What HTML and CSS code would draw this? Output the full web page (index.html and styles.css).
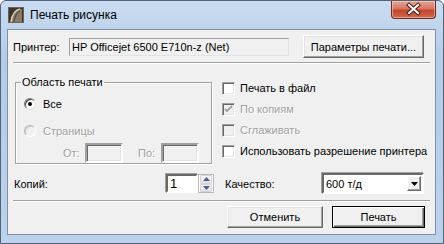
FILE: index.html
```html
<!DOCTYPE html>
<html lang="ru">
<head>
    <meta charset="UTF-8">
    <meta name="viewport" content="width=device-width, initial-scale=1.0">
    <title>Печать рисунка</title>
    <link rel="stylesheet" href="styles.css">
</head>
<body>
    <div class="window">
        <div class="titlebar">
            <svg class="app-icon" width="16" height="16" viewBox="0 0 16 16">
                <rect x="0.5" y="0.5" width="15" height="15" fill="#3d362f" stroke="#6b6259"/>
                <path d="M3 15 C4 8 7 3 12 2 L14 2 L14 15 Z" fill="#8a7a66"/>
                <path d="M3 15 C4 8 7 3 12 2" fill="none" stroke="#d9cdb8" stroke-width="1.6"/>
                <path d="M6 15 C7 9 9 5 12 4" fill="none" stroke="#5a4e42" stroke-width="1.2"/>
            </svg>
            <span class="title">Печать рисунка</span>
            <div class="close-btn">
                <svg width="43" height="17" viewBox="0 0 43 17">
                    <path d="M17 4 L26 12 M26 4 L17 12" stroke="#4a1a10" stroke-width="4" stroke-linecap="square"/>
                    <path d="M17 4 L26 12 M26 4 L17 12" stroke="#fff" stroke-width="2" stroke-linecap="square"/>
                </svg>
            </div>
        </div>

        <div class="client">
            <div class="printer-row">
                <span class="printer-label">Принтер:</span>
                <div class="printer-name">HP Officejet 6500 E710n-z (Net)</div>
                <button class="btn setup-btn">Параметры печати...</button>
            </div>

            <div class="sep"></div>

            <div class="options">
                <fieldset class="group">
                    <legend>Область печати</legend>
                    <label class="radio first"><span class="radio-box checked"></span>Все</label>
                    <label class="radio disabled"><span class="radio-box"></span>Страницы</label>
                    <div class="range-row disabled">
                        <span class="range-label">От:</span>
                        <span class="edit"></span>
                        <span class="range-label second">По:</span>
                        <span class="edit"></span>
                    </div>
                </fieldset>

                <div class="checks">
                    <label class="check"><span class="check-box"></span>Печать в файл</label>
                    <label class="check disabled">
                        <span class="check-box">
                            <svg width="11" height="11" viewBox="0 0 11 11"><path d="M2 5 L4 7 L9 2" fill="none" stroke="#a0a0a0" stroke-width="1.8"/></svg>
                        </span>По копиям
                    </label>
                    <label class="check disabled"><span class="check-box"></span>Сглаживать</label>
                    <label class="check"><span class="check-box"></span>Использовать разрешение принтера</label>
                </div>

                <div class="copies-row">
                    <span class="copies-label">Копий:</span>
                    <div class="spin">
                        <span class="spin-edit">1</span>
                        <div class="spin-buttons">
                            <span class="spin-btn"><svg width="7" height="4" viewBox="0 0 7 4"><path d="M0 4 L3.5 0 L7 4 Z" fill="#4a5f8c"/></svg></span>
                            <span class="spin-btn"><svg width="7" height="4" viewBox="0 0 7 4"><path d="M0 0 L3.5 4 L7 0 Z" fill="#4a5f8c"/></svg></span>
                        </div>
                    </div>
                </div>

                <div class="quality-row">
                    <span class="quality-label">Качество:</span>
                    <div class="combo">
                        <span class="combo-text">600 т/д</span>
                        <span class="combo-btn"><svg width="7" height="4" viewBox="0 0 7 4"><path d="M0 0 L3.5 4 L7 0 Z" fill="#000"/></svg></span>
                    </div>
                </div>
            </div>

            <div class="sep bottom"></div>

            <div class="buttons">
                <button class="btn cancel-btn">Отменить</button>
                <button class="btn default print-btn">Печать</button>
            </div>
        </div>
    </div>
</body>
</html>
```

FILE: styles.css
```css
body {
    margin: 0;
    font-family: "Liberation Sans", Arial, sans-serif;
    font-size: 11px;
    color: #000;
    background-color: #fff;
}
.window {
    width: 444px;
    height: 244px;
    box-sizing: border-box;
    border: 1px solid #50637a;
    border-radius: 6px 6px 0 0;
    background: linear-gradient(#c9dcf1, #b5cce7 60px, #bcd2eb);
    padding: 0 7px 8px 6px;
    display: flex;
    flex-direction: column;
}
.titlebar {
    height: 28px;
    display: flex;
    align-items: flex-start;
}
.app-icon {
    margin: 6px 0 0 1px;
}
.title {
    margin: 7px 0 0 6px;
    font-size: 12px;
    line-height: 15px;
}
.close-btn {
    margin-left: auto;
    width: 43px;
    height: 17px;
    border: 1px solid #6d2b1f;
    border-top: none;
    border-radius: 0 0 4px 4px;
    background: linear-gradient(#e8a594, #d47660 45%, #c3452c 55%, #d0694f);
    box-shadow: inset 0 0 0 1px rgba(255, 220, 210, 0.5);
    display: flex;
}
.client {
    flex: 1;
    border: 1px solid #7d90a8;
    background-color: #f0f0f0;
    padding: 5px 0 0 5px;
    display: flex;
    flex-direction: column;
}
.printer-row {
    height: 23px;
    display: flex;
    align-items: center;
}
.printer-label {
    width: 56px;
}
.printer-name {
    width: 216px;
    height: 16px;
    line-height: 16px;
    padding-left: 2px;
    border: 1px solid;
    border-color: #a0a0a0 #e3e3e3 #e3e3e3 #a0a0a0;
}
.btn {
    background-color: #f0f0f0;
    border: 1px solid;
    border-color: #fff #696969 #696969 #fff;
    box-shadow: inset -1px -1px #a0a0a0, inset 1px 1px #e3e3e3;
    font-family: inherit;
    font-size: 11px;
    color: #000;
    padding: 0;
}
.btn.default {
    border-color: #000;
    box-shadow: inset 1px 1px #fff, inset -1px -1px #696969, inset -2px -2px #a0a0a0;
}
.setup-btn {
    width: 121px;
    height: 23px;
    margin-left: 14px;
}
.sep {
    width: 417px;
    margin-top: 4px;
    border-top: 1px solid #a0a0a0;
    border-bottom: 1px solid #fff;
}
.sep.bottom {
    margin-top: 6px;
}
.options {
    display: grid;
    grid-template-columns: 209px 1fr;
}
.group {
    margin: 12px 0 0 2px;
    padding: 0 0 0 8px;
    width: 197px;
    height: 88px;
    box-sizing: border-box;
    border: 1px solid #a0a0a0;
    box-shadow: inset 1px 1px #fff, 1px 1px #fff;
    min-inline-size: 0;
}
.group legend {
    padding: 0 1px;
    margin-left: -3px;
    line-height: 13px;
}
.radio {
    height: 16px;
    display: flex;
    align-items: center;
}
.radio.first {
    margin-top: 7px;
}
.radio.disabled {
    margin-top: 11px;
}
.radio-box {
    width: 10px;
    height: 10px;
    margin-right: 7px;
    border: 1px solid;
    border-color: #7a7a7a #e3e3e3 #e3e3e3 #7a7a7a;
    border-radius: 50%;
    background-color: #fff;
    box-shadow: inset 1px 1px #404040;
    display: flex;
    align-items: center;
    justify-content: center;
}
.radio-box.checked::after {
    content: "";
    width: 4px;
    height: 4px;
    border-radius: 50%;
    background-color: #000;
}
.disabled {
    color: #a0a0a0;
    text-shadow: 1px 1px #fff;
}
.disabled .radio-box {
    background-color: #f0f0f0;
    border-color: #b5b5b5 #fff #fff #b5b5b5;
    box-shadow: inset 1px 1px #d0d0d0;
}
.range-row {
    margin: 4px 0 0 39px;
    height: 20px;
    display: flex;
    align-items: center;
}
.range-label {
    width: 22px;
}
.range-label.second {
    margin-left: 15px;
    width: 23px;
}
.edit {
    width: 34px;
    height: 16px;
    border: 2px solid;
    border-color: #a0a0a0 #fff #fff #a0a0a0;
    box-shadow: inset 1px 1px #696969, inset -1px -1px #e3e3e3;
    background-color: #f0f0f0;
}
.checks {
    margin-top: 16px;
    display: flex;
    flex-direction: column;
    gap: 5px;
}
.check {
    height: 16px;
    display: flex;
    align-items: center;
}
.check-box {
    width: 11px;
    height: 11px;
    margin-right: 5px;
    border: 1px solid;
    border-color: #a0a0a0 #fff #fff #a0a0a0;
    box-shadow: inset 1px 1px #696969, inset -1px -1px #e3e3e3;
    background-color: #fff;
    display: flex;
}
.check.disabled .check-box {
    background-color: #f0f0f0;
}
.copies-row,
.quality-row {
    margin-top: 9px;
    height: 21px;
    display: flex;
    align-items: center;
}
.copies-label {
    width: 152px;
    padding-left: 1px;
}
.spin {
    display: flex;
    height: 19px;
}
.spin-edit {
    width: 26px;
    height: 15px;
    line-height: 16px;
    font-size: 13px;
    padding-left: 2px;
    border: 2px solid;
    border-color: #696969 #fff #fff #696969;
    box-shadow: -1px -1px #a0a0a0;
    background-color: #fff;
}
.spin-buttons {
    width: 16px;
    display: flex;
    flex-direction: column;
    border: 1px solid #b8b8b8;
    box-sizing: border-box;
    background-color: #fff;
}
.spin-btn {
    flex: 1;
    margin: 0 1px;
    border: 1px solid #d4d4d4;
    border-radius: 1px;
    background: linear-gradient(#f6f6f6, #e2e2e2);
    display: flex;
    align-items: center;
    justify-content: center;
}
.quality-label {
    width: 97px;
    padding-left: 3px;
}
.combo {
    width: 102px;
    height: 21px;
    box-sizing: border-box;
    border: 2px solid;
    border-color: #696969 #fff #fff #696969;
    box-shadow: -1px -1px #a0a0a0;
    background-color: #fff;
    display: flex;
    align-items: center;
}
.combo-text {
    flex: 1;
    padding-left: 2px;
}
.combo-btn {
    width: 14px;
    height: 15px;
    margin-right: 1px;
    box-sizing: border-box;
    background-color: #f0f0f0;
    border: 1px solid;
    border-color: #fff #696969 #696969 #fff;
    box-shadow: inset -1px -1px #a0a0a0;
    display: flex;
    align-items: center;
    justify-content: center;
}
.buttons {
    margin-top: 4px;
    padding-right: 10px;
    display: flex;
    justify-content: flex-end;
    gap: 9px;
}
.cancel-btn {
    width: 96px;
    height: 22px;
}
.print-btn {
    width: 93px;
    height: 22px;
}
```
